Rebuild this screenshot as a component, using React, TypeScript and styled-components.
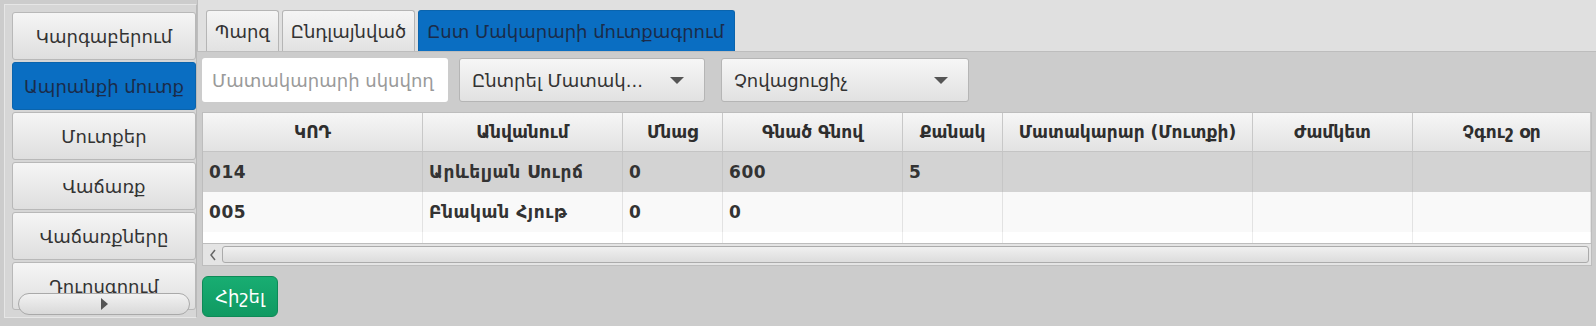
import React from 'react'
import styled, { createGlobalStyle } from 'styled-components'

const GlobalStyle = createGlobalStyle`
  html, body {
    margin: 0;
    padding: 0;
    background: #cccccc;
    font-family: "DejaVu Sans", "Noto Sans", sans-serif;
  }
`

const Page = styled.div`
  display: flex;
  width: 1596px;
  height: 326px;
  background: #cccccc;
  overflow: hidden;
`

const Sidebar = styled.div`
  position: relative;
  width: 191px;
  height: 312px;
  margin: 4px 0 0 4px;
  background: #d6d6d6;
  border: 1px solid #e6e6e6;
  border-right: 1px solid #b9b9b9;
  overflow: hidden;
`

const NavList = styled.div`
  display: flex;
  flex-direction: column;
  gap: 2px;
  padding: 7px 0 0 7px;
`

const NavButton = styled.div<{ active?: boolean }>`
  height: 46px;
  display: flex;
  align-items: center;
  justify-content: center;
  border: 1px solid ${p => (p.active ? '#0a64ad' : '#b8b8b8')};
  border-radius: 3px;
  background: ${p =>
    p.active ? '#0a6ec2' : 'linear-gradient(#f5f5f5, #dedede)'};
  color: ${p => (p.active ? '#1b2c4a' : '#333333')};
  font-size: 18px;
  white-space: nowrap;
`

const SideScroll = styled.div`
  position: absolute;
  left: 13px;
  bottom: 2px;
  width: 170px;
  height: 20px;
  border: 1px solid #a9a9a9;
  border-radius: 11px;
  background: linear-gradient(#f2f2f2, #d9d9d9);
  display: flex;
  align-items: center;
  justify-content: center;
`

const RightArrow = styled.div`
  width: 0;
  height: 0;
  border-top: 6px solid transparent;
  border-bottom: 6px solid transparent;
  border-left: 7px solid #555555;
`

const Main = styled.div`
  flex: 1;
  display: flex;
  flex-direction: column;
  min-width: 0;
`

const TabBar = styled.div`
  height: 41px;
  padding: 10px 0 0 8px;
  background: #e0e0e0;
  border-bottom: 1px solid #bdbdbd;
  border-left: 1px solid #bdbdbd;
  display: flex;
  align-items: flex-end;
  gap: 3px;
`

const Tab = styled.div<{ active?: boolean }>`
  height: 40px;
  padding: 0 ${p => (p.active ? '10px' : '8px')} 0 8px;
  display: flex;
  align-items: center;
  border: 1px solid ${p => (p.active ? '#0a64ad' : '#b5b5b5')};
  border-bottom: none;
  border-radius: 3px 3px 0 0;
  background: ${p =>
    p.active ? '#0a6ec2' : 'linear-gradient(#f5f5f5, #e2e2e2)'};
  color: ${p => (p.active ? '#1b2c4a' : '#333333')};
  font-size: 18px;
  white-space: nowrap;
`

const Content = styled.div`
  display: flex;
  flex-direction: column;
  padding: 6px 4px 0 5px;
`

const FilterRow = styled.div`
  height: 44px;
  display: flex;
  gap: 11px;
`

const TextField = styled.div`
  width: 236px;
  padding-left: 10px;
  display: flex;
  align-items: center;
  background: #ffffff;
  border-radius: 3px;
  color: #9a9a9a;
  font-size: 18px;
  white-space: nowrap;
  overflow: hidden;
`

const Combo = styled.div<{ width: number; offset?: number }>`
  width: ${p => p.width}px;
  margin-left: ${p => p.offset ?? 0}px;
  box-sizing: border-box;
  padding: 0 20px 0 12px;
  display: flex;
  align-items: center;
  justify-content: space-between;
  border: 1px solid #b5b5b5;
  border-radius: 3px;
  background: linear-gradient(#f6f6f6, #e1e1e1);
  color: #333333;
  font-size: 18px;
  white-space: nowrap;
`

const DownArrow = styled.div`
  width: 0;
  height: 0;
  border-left: 7px solid transparent;
  border-right: 7px solid transparent;
  border-top: 7px solid #555555;
`

const Table = styled.div`
  margin-top: 10px;
  background: #ffffff;
  border: 1px solid #bdbdbd;
  display: flex;
  flex-direction: column;
`

const cols = '220px 200px 100px 180px 100px 250px 160px 1fr'

const HeaderRow = styled.div`
  display: grid;
  grid-template-columns: ${cols};
  height: 38px;
  background: linear-gradient(#f6f6f6, #e2e2e2);
  border-bottom: 1px solid #c4c4c4;
`

const HeaderCell = styled.div`
  display: flex;
  align-items: center;
  justify-content: center;
  border-right: 1px solid #c8c8c8;
  color: #2e2e2e;
  font-size: 17px;
  font-weight: bold;
  white-space: nowrap;
  overflow: hidden;
`

const Row = styled.div<{ shade: string; h?: number }>`
  display: grid;
  grid-template-columns: ${cols};
  height: ${p => p.h ?? 40}px;
  background: ${p => p.shade};
`

const Cell = styled.div<{ line: string }>`
  display: flex;
  align-items: center;
  padding-left: 6px;
  border-right: 1px solid ${p => p.line};
  color: #333333;
  font-size: 17px;
  font-weight: bold;
  letter-spacing: 0.6px;
  white-space: nowrap;
  overflow: hidden;
`

const HScroll = styled.div`
  height: 21px;
  display: flex;
  background: #e4e4e4;
  border-top: 1px solid #bdbdbd;
`

const ScrollButton = styled.div`
  width: 19px;
  display: flex;
  align-items: center;
  justify-content: center;
`

const Thumb = styled.div`
  flex: 1;
  margin: 2px 2px 2px 0;
  border: 1px solid #ababab;
  border-radius: 3px;
  background: linear-gradient(#f0f0f0, #dcdcdc);
`

const SaveButton = styled.div`
  margin-top: 10px;
  width: 76px;
  height: 41px;
  display: flex;
  align-items: center;
  justify-content: center;
  border-radius: 6px;
  background: linear-gradient(#18ad72, #109a62);
  border: 1px solid #0e8a57;
  box-sizing: border-box;
  color: #ffffff;
  font-size: 18px;
`

const navItems = ['Կարգաբերում', 'Ապրանքի մուտք', 'Մուտքեր', 'Վաճառք', 'Վաճառքները', 'Դուրսգրում']
const headers = ['ԿՈԴ', 'Անվանում', 'Մնաց', 'Գնած Գնով', 'Քանակ', 'Մատակարար (Մուտքի)', 'Ժամկետ', 'Չգուշ օր']
const rows = [
  { shade: '#d3d3d3', line: '#c6c6c6', cells: ['014', 'Արևելյան Սուրճ', '0', '600', '5', '', '', ''] },
  { shade: '#f9f9f9', line: '#e2e2e2', cells: ['005', 'Բնական Հյութ', '0', '0', '', '', '', ''] },
]

export default function App() {
  return (
    <Page>
      <GlobalStyle />
      <Sidebar>
        <NavList>
          {navItems.map((n, i) => (
            <NavButton key={n} active={i === 1}>
              {n}
            </NavButton>
          ))}
        </NavList>
        <SideScroll>
          <RightArrow />
        </SideScroll>
      </Sidebar>
      <Main>
        <TabBar>
          <Tab>Պարզ</Tab>
          <Tab>Ընդլայնված</Tab>
          <Tab active>Ըստ Մակարարի մուտքագրում</Tab>
        </TabBar>
        <Content>
          <FilterRow>
            <TextField>Մատակարարի սկսվող</TextField>
            <Combo width={246}>
              <span>Ընտրել Մատակ...</span>
              <DownArrow />
            </Combo>
            <Combo width={248} offset={5}>
              <span>Չովացուցիչ</span>
              <DownArrow />
            </Combo>
          </FilterRow>
          <Table>
            <HeaderRow>
              {headers.map(h => (
                <HeaderCell key={h}>{h}</HeaderCell>
              ))}
            </HeaderRow>
            {rows.map(r => (
              <Row key={r.cells[0]} shade={r.shade}>
                {r.cells.map((c, i) => (
                  <Cell key={i} line={r.line}>
                    {c}
                  </Cell>
                ))}
              </Row>
            ))}
            <Row shade="#ffffff" h={11}>
              {headers.map(h => (
                <Cell key={h} line="#ececec" />
              ))}
            </Row>
            <HScroll>
              <ScrollButton>
                <svg width="8" height="12" viewBox="0 0 8 12">
                  <path d="M6 1 L2 6 L6 11" fill="none" stroke="#666" strokeWidth="1.5" />
                </svg>
              </ScrollButton>
              <Thumb />
            </HScroll>
          </Table>
          <SaveButton>Հիշել</SaveButton>
        </Content>
      </Main>
    </Page>
  )
}
